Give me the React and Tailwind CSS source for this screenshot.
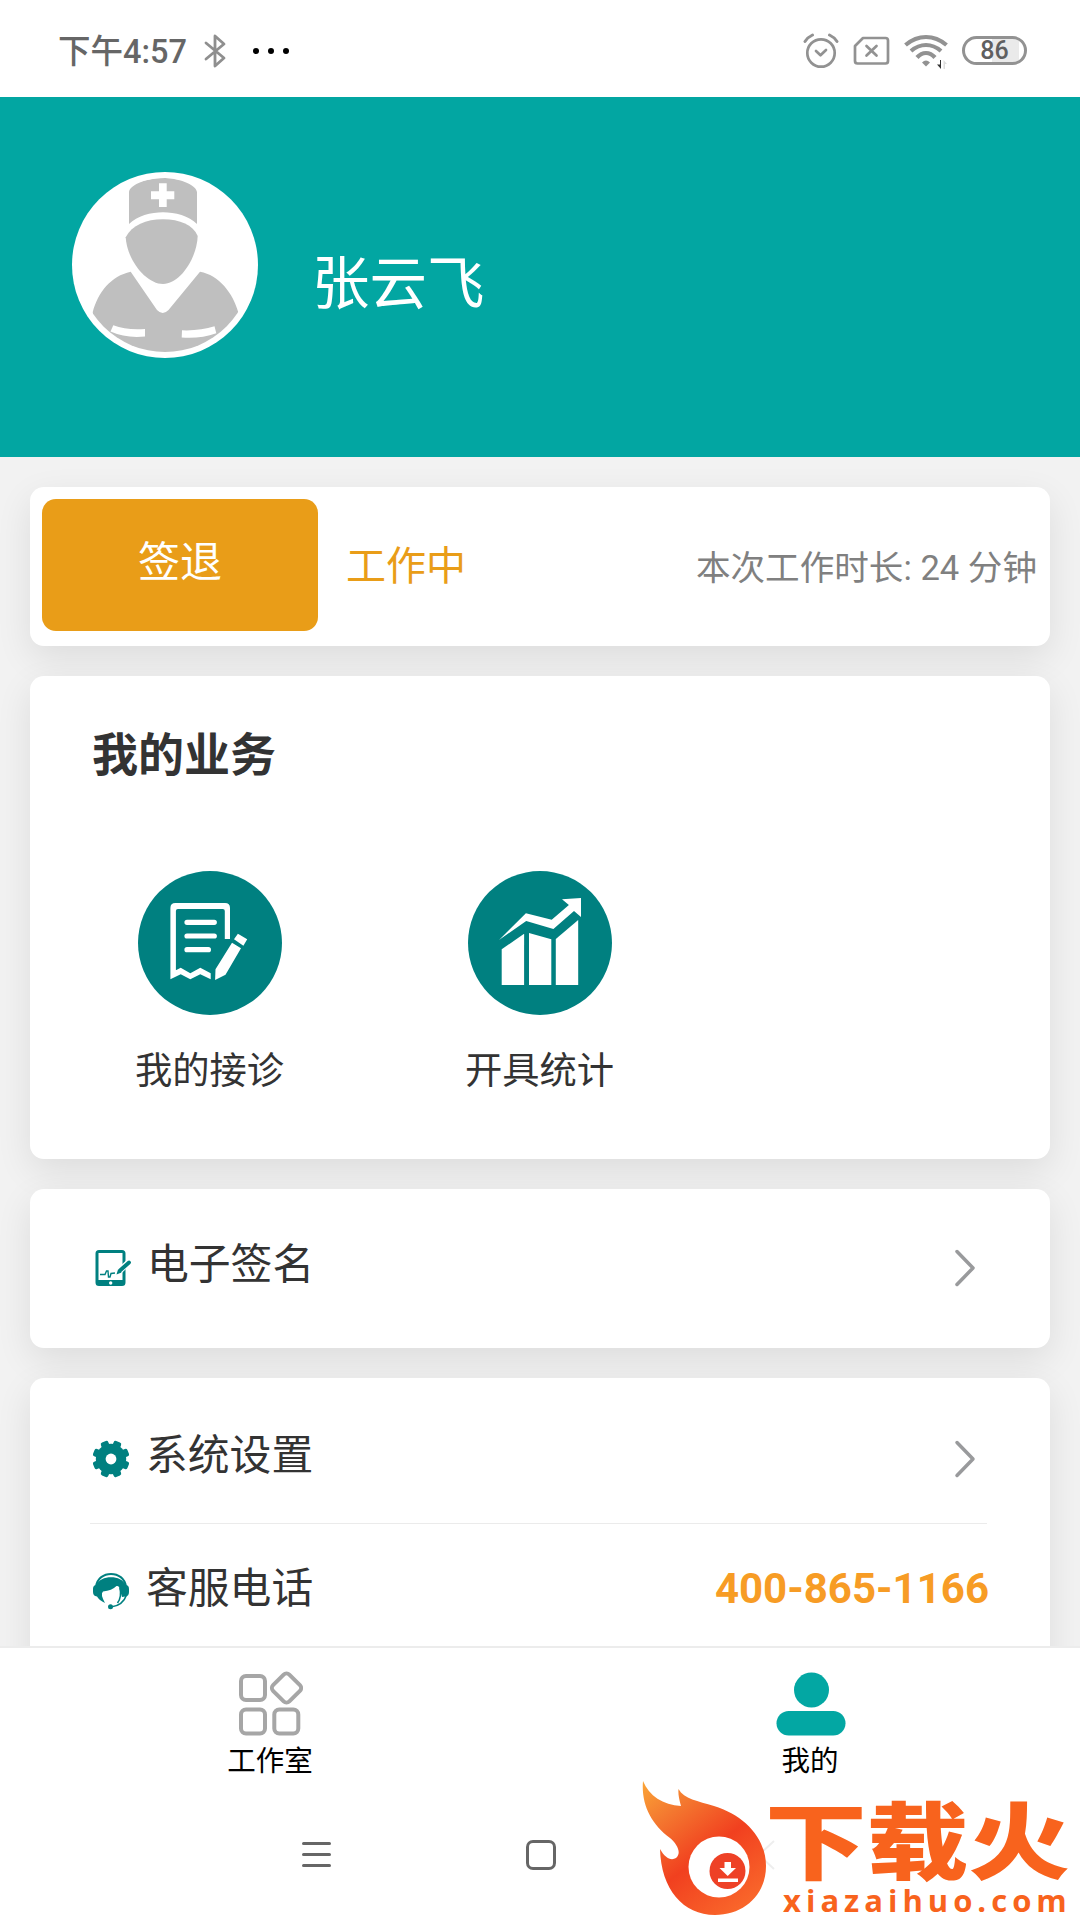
import React from 'react';

const TEAL = '#008080';

const StatusBar = () => (
  <div className="flex h-[97px] shrink-0 items-center justify-between bg-white pt-1 pr-[53px] pl-[58px]">
    <div className="flex items-center">
      <span className="pt-[3px] text-[32.5px] leading-none font-medium text-[#666]">下午4:57</span>
      <svg className="ml-[16px] h-[36px] w-[24px]" viewBox="0 0 24 36" fill="none" stroke="#8f8f8f" strokeWidth="2.8" strokeLinejoin="round" strokeLinecap="round">
        <path d="M3 10 L21 25 L12 33 V3 L21 11 L3 26" />
      </svg>
      <div className="ml-[26px] flex gap-[9px]">
        <span className="h-[6px] w-[6px] rounded-full bg-black" />
        <span className="h-[6px] w-[6px] rounded-full bg-black" />
        <span className="h-[6px] w-[6px] rounded-full bg-black" />
      </div>
    </div>

    <div className="flex items-center">
      {/* Alarm */}
      <svg className="h-[36px] w-[36px]" viewBox="0 0 36 36" fill="none" stroke="#929292" strokeWidth="2.7" strokeLinecap="round" strokeLinejoin="round">
        <circle cx="18" cy="20" r="13.7" />
        <path d="M13 18 L17.5 22.3 L23 17" />
        <path d="M2 8.5 Q5 4 9.5 2 M26.5 2 Q31 4 34 8.5" strokeWidth="3" />
      </svg>
      {/* No SIM */}
      <svg className="ml-[14px] h-[30px] w-[37px]" viewBox="0 0 37 30" fill="none" stroke="#929292" strokeWidth="2.7" strokeLinecap="round" strokeLinejoin="round">
        <path d="M10 2 H32.5 Q35 2 35 4.5 V25 Q35 27.5 32.5 27.5 H4.5 Q2 27.5 2 25 V10 Z" />
        <path d="M13.5 10 L23.5 19.5 M23.5 10 L13.5 19.5" />
      </svg>
      {/* Wifi */}
      <svg className="ml-[14px] h-[36px] w-[44px]" viewBox="0 0 44 36" fill="none" stroke="#929292" strokeWidth="4.2">
        <path d="M1.5 12 Q11 4 22 4 T42.5 12" />
        <path d="M7 18 Q14 12 22 12 T37 18" />
        <path d="M13 24.5 Q17 20 22 20 T31 24.5" />
        <path d="M18 29.5 Q22 25.5 26 29.5 L22 33.5 Z" fill="#929292" stroke="none" />
        <path d="M37 27 V36 L33 31.5 H36 V27 Z" fill="#333" stroke="none" />
        <path d="M39.5 36 V27 L43 31 H41 V36 Z" fill="#ddd" stroke="none" />
      </svg>
      {/* Battery */}
      <div className="ml-[14px] flex h-[29px] w-[65px] items-center justify-center rounded-full border-[3px] border-[#929292] bg-[linear-gradient(90deg,#fff_45%,#eaeaea_45%,#eaeaea_91%,#fff_91%)]">
        <span className="text-[25px] leading-none font-medium text-[#606060]">86</span>
      </div>
    </div>
  </div>
);

const Avatar = () => (
  <svg className="h-[186px] w-[186px]" viewBox="0 0 186 186">
    <defs>
      <clipPath id="avatar">
        <circle cx="93" cy="93" r="87" />
      </clipPath>
    </defs>
    <circle cx="93" cy="93" r="93" fill="#fff" />
    <g clipPath="url(#avatar)" fill="#bfbfbf">
      <path d="M57 52 V20 C58 12 77 6 91 6 S124 12 125 20 V52 C117 44 103 40.3 91 40.3 S65 44 57 52 Z" />
      <path d="M53.7 65.3 C60 53 74 47.3 91 47.3 S121 53 125.7 64 C125 86 108 112 91 112 S55 88 53.7 65.3 Z" />
      <path d="M20.7 140.3 C26 120 39 104 58.7 99.7 L85 138 Q90.7 144 96.5 138 L128 99.7 C147 103 161 121 166.3 140.3 L160 186 H26 Z" />
    </g>
    <g fill="#fff">
      <path d="M87 11.3 H94.7 V19.3 H102.3 V27.3 H94.7 V35 H87 V27.3 H79 V19.3 H87 Z" />
      <path d="M41.3 153.3 Q55 158.5 73 157 V164.5 Q54 166.5 38.5 159.5 Z" />
      <path d="M110 158.3 Q128 159 142.5 154.3 L144.3 161.3 Q128 167 109.7 165.5 Z" />
    </g>
  </svg>
);

const ConsultIcon = () => (
  <svg className="h-[144px] w-[144px]" viewBox="0 0 144 144">
    <circle cx="72" cy="72" r="72" fill={TEAL} />
    <path fill="#fff" d="M32.4 108.3 V37 Q32.4 32 37.4 32 H87 Q92 32 92 37 V68 H86.8 V40 Q86.8 38 84.8 38 H39.9 Q37.9 38 37.9 40 V99.3 L42.7 96.7 L52.3 102.3 L62.3 96.7 L72.7 102.3 V108.3 L62.3 103.3 L52.3 108.3 L42.7 103.3 Z" />
    <path stroke="#fff" strokeWidth="5.2" strokeLinecap="round" d="M49 51.3 H76.3 M49 65 H76.3 M49 78.7 H70.4" />
    <path fill="#fff" d="M99.9 62.7 L109.2 68.3 L105.4 74.7 L96 68.3 Z M94 71.7 L103 77.3 L87.5 103.7 L77.1 109 L77.5 98.3 Z" />
  </svg>
);

const StatsIcon = () => (
  <svg className="h-[144px] w-[144px]" viewBox="0 0 144 144">
    <circle cx="72" cy="72" r="72" fill={TEAL} />
    <g fill="#fff">
      <path d="M33.7 78.3 L56.1 62.7 V114 H33.7 Z" />
      <path d="M61 62 L83.3 68.3 V114 H61 Z" />
      <path d="M87.8 68 L110.2 49 V114 H87.8 Z" />
      <path d="M31 69 L57.9 42.3 L83.7 48.7 L100.9 34 L94 28.3 L113 27 V46 L106 40 L85.4 58 L58.2 50 Z" />
    </g>
  </svg>
);

const SignatureIcon = () => (
  <svg className="h-[38px] w-[38px]" viewBox="0 0 38 38" fill="none">
    <path fillRule="evenodd" fill={TEAL} d="M6 1 H29 Q32.5 1 32.5 4.5 V33.5 Q32.5 37 29 37 H6 Q2.5 37 2.5 33.5 V4.5 Q2.5 1 6 1 Z M5.5 4 V31 H29.5 V4 Z" />
    <circle cx="17.7" cy="34" r="1.7" fill="#fff" />
    <path stroke="#fff" strokeWidth="6" d="M26 22.5 L38 11" />
    <path stroke={TEAL} strokeWidth="1.4" d="M7 25.5 H12 L13.5 22 H15 L15.5 28 H17 L18 24.5 L22 24" />
    <path stroke={TEAL} strokeWidth="3.8" strokeLinecap="round" d="M27 21.5 L36 13.5" />
    <path fill={TEAL} d="M23.5 25.5 L25 20.5 L28.5 23.5 Z" />
  </svg>
);

const GearIcon = () => (
  <svg className="h-[38px] w-[38px]" viewBox="0 0 38 38">
    <g fill={TEAL}>
      <circle cx="19" cy="19" r="15.2" />
      {[22.5, 67.5, 112.5, 157.5, 202.5, 247.5, 292.5, 337.5].map((angle) => (
        <rect key={angle} x="15" y="0.4" width="8" height="8" rx="2" transform={`rotate(${angle} 19 19)`} />
      ))}
    </g>
    <circle cx="19" cy="19" r="5.4" fill="#fff" />
  </svg>
);

const HeadsetIcon = () => (
  <svg className="h-[38px] w-[38px]" viewBox="0 0 38 38" fill="none">
    <path stroke={TEAL} strokeWidth="2" d="M4 15 C6 -2.5 32 -2.5 34 15" />
    <path fill={TEAL} d="M1 17 Q1 13 4.5 13 C8 2.5 30 2.5 33.5 13 Q37 13 37 17 V20 Q37 24 33.5 24.5 L30 25 L27 15 Q26 13.5 24.5 14 Q20 18.5 11 19.5 Q8 22 13 31 Q7 28 5 24.5 Q1 24 1 20 Z" />
    <path stroke={TEAL} strokeWidth="1.6" d="M28 16 Q30 25 25.5 31 M34.5 23 Q31 33.5 19 35" />
    <circle cx="18.5" cy="34.7" r="2.5" fill={TEAL} />
  </svg>
);

const Chevron = () => (
  <svg className="h-[38px] w-[22px]" viewBox="0 0 22 38" fill="none" stroke="#999a9c" strokeWidth="3.5" strokeLinecap="round" strokeLinejoin="round">
    <path d="M3 2.5 L19 19 L3 35.5" />
  </svg>
);

const Card = ({ className, children }) => (
  <section className={`shrink-0 rounded-[14px] bg-white shadow-[0_12px_36px_rgba(0,0,0,0.09)] ${className}`}>
    {children}
  </section>
);

const services = [
  { label: '我的接诊', icon: ConsultIcon },
  { label: '开具统计', icon: StatsIcon },
];

const Row = ({ icon: Icon, label, className, children }) => (
  <div className={`flex items-center justify-between ${className}`}>
    <div className="flex items-center">
      <Icon />
      <span className="ml-[16px] pb-[5px] text-[41.8px] leading-[60px] text-[#333]">{label}</span>
    </div>
    {children}
  </div>
);

const TabBar = () => (
  <nav className="grid h-[148px] shrink-0 grid-cols-2 border-t-2 border-[#ececec] bg-white pt-[22px] text-[28.5px] leading-[42px] text-black">
    <div className="flex flex-col items-center">
      <svg className="mb-[4px] h-[67px] w-[66px]" viewBox="0 0 66 67" fill="none" stroke="#a6a6a6" strokeWidth="4">
        <rect x="4" y="6" width="24" height="24" rx="5" />
        <rect x="4" y="39.5" width="24" height="24" rx="5" />
        <rect x="37.3" y="39.5" width="24" height="24" rx="5" />
        <rect x="38" y="6.5" width="23" height="23" rx="4" transform="rotate(45 49.5 18)" />
      </svg>
      <span>工作室</span>
    </div>
    <div className="flex flex-col items-center">
      <svg className="mb-[4px] h-[67px] w-[72px]" viewBox="0 0 72 67" fill="#03a7a3">
        <circle cx="37.5" cy="20" r="17.5" />
        <rect x="2.5" y="41" width="69" height="24.5" rx="12.25" />
      </svg>
      <span>我的</span>
    </div>
  </nav>
);

const SystemNav = () => (
  <div className="flex h-[126px] shrink-0 items-center bg-white pb-[5px] pl-[302px]">
    <div className="flex w-[29px] flex-col gap-[8px]">
      <span className="h-[3px] rounded-full bg-[#666]" />
      <span className="h-[3px] rounded-full bg-[#666]" />
      <span className="h-[3px] rounded-full bg-[#666]" />
    </div>
    <span className="ml-[195px] h-[30px] w-[30px] rounded-[7px] border-[3px] border-[#666]" />
    <svg className="ml-[198px] h-[30px] w-[22px]" viewBox="0 0 22 30" fill="none" stroke="#eee" strokeWidth="2">
      <path d="M20 1 L5 15 L20 29" />
    </svg>
  </div>
);

// Site badge that floats over the lower right corner
const Watermark = () => (
  <div className="absolute right-0 bottom-0 flex h-[140px] w-[440px] text-[#f8631d]">
    <svg className="h-[140px] w-[130px] shrink-0" viewBox="0 0 130 140">
      <defs>
        <linearGradient id="flame" x1="0" y1="0" x2="0.7" y2="1">
          <stop offset="0" stopColor="#fba536" />
          <stop offset="0.25" stopColor="#f47a30" />
          <stop offset="0.6" stopColor="#f1401f" />
          <stop offset="1" stopColor="#f9652a" />
        </linearGradient>
      </defs>
      <path fill="url(#flame)" d="M3 1 C9 16 23 25 41 26 C39 19 38 14 38.5 9 C44 19 58 21 74 26 C104 35 126 58 126 86 C126 115 104 135 75 135 C43 135 21 109 20 69 C25 78 31 81 36 78 C42 73 37 64 30 58 C11 44 1 24 3 1 Z" />
      <circle cx="79" cy="87" r="30.5" fill="#fff" />
      <circle cx="87.5" cy="91" r="18" fill="#ee4126" />
      <path fill="#fff" d="M84.5 82 H91 V88 H96 L87.7 96 L79.5 88 H84.5 Z M78 98.5 H98 V102 H78 Z" />
    </svg>
    <div className="flex flex-col pt-[25px] whitespace-nowrap">
      <div className="-ml-[5px] origin-left scale-x-[1.21] text-[84px] leading-[80px] font-black">下载火</div>
      <div className="pl-[13px] font-['Open_Sans',sans-serif] text-[31px] leading-[30px] font-bold tracking-[5px]">xiazaihuo.com</div>
    </div>
  </div>
);

const App = () => {
  return (
    <div className="relative flex h-[1920px] w-[1080px] flex-col overflow-hidden bg-[#f2f2f2] font-[Roboto,'Noto_Sans_CJK_SC',sans-serif]">
      <StatusBar />

      <header className="flex h-[360px] shrink-0 items-start bg-[#02a6a2] pt-[75px] pl-[72px]">
        <Avatar />
        <h1 className="ml-[54px] pt-[73px] text-[57.5px] leading-[80px] text-white">张云飞</h1>
      </header>

      <main className="flex min-h-0 flex-1 flex-col gap-[30px] overflow-hidden px-[30px] pt-[30px]">
        <Card className="flex h-[159px] items-start p-[12px]">
          <button className="h-[132px] w-[276px] rounded-[14px] bg-[#e99d18] pb-[5px] text-[42px] leading-[60px] text-white">签退</button>
          <span className="ml-[28px] pt-[38px] text-[40px] leading-[60px] text-[#e99d18]">工作中</span>
          <span className="ml-auto pt-[39px] pr-px text-[34.6px] leading-[60px] text-[#808080]">本次工作时长: 24 分钟</span>
        </Card>

        <Card className="h-[483px] px-[15px] pt-[45px]">
          <h2 className="pl-[47px] text-[46px] leading-[68px] font-bold text-[#333]">我的业务</h2>
          <div className="mt-[82px] grid grid-cols-3">
            {services.map(({ label, icon: Icon }) => (
              <div key={label} className="flex flex-col items-center">
                <Icon />
                <span className="mt-[29px] pr-px text-[37.3px] leading-[54px] text-[#333]">{label}</span>
              </div>
            ))}
          </div>
        </Card>

        <Card className="h-[159px] pr-[74px] pb-[2px] pl-[63px]">
          <Row icon={SignatureIcon} label="电子签名" className="h-full">
            <Chevron />
          </Row>
        </Card>

        <Card className="h-[330px] pr-[63px] pl-[60px]">
          <Row icon={GearIcon} label="系统设置" className="h-[146px] border-b border-[#ebebeb] pt-[16px] pr-[11px] pl-[2px]">
            <Chevron />
          </Row>
          <Row icon={HeadsetIcon} label="客服电话" className="h-[134px] pl-[2px]">
            <span className="-mr-[2px] pb-[4px] text-[42px] leading-[60px] font-bold text-[#f79c25]">400-865-1166</span>
          </Row>
        </Card>
      </main>

      <TabBar />
      <SystemNav />
      <Watermark />
    </div>
  );
};

export default App;
